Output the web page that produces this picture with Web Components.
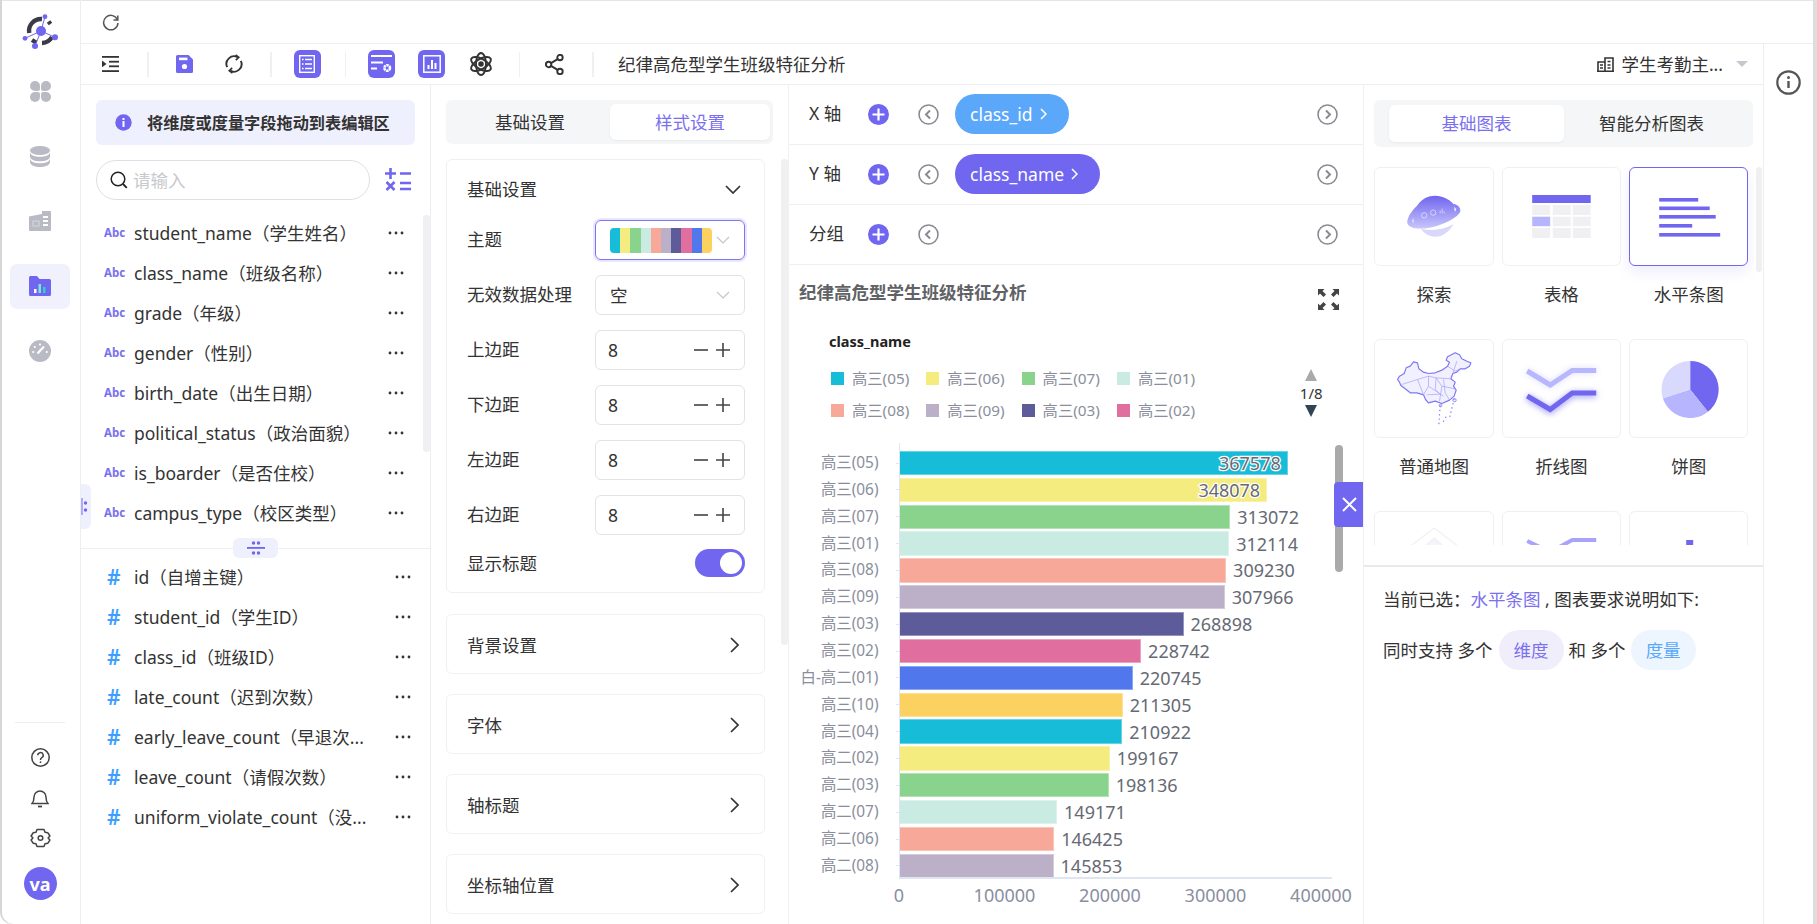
<!DOCTYPE html>
<html lang="zh"><head><meta charset="utf-8"><title>图表编辑</title>
<style>
html,body{margin:0;padding:0;background:#fff;overflow:hidden}
body{font-family:"Noto Sans","Noto Sans CJK SC",sans-serif;font-size:17.5px;color:#333}
</style></head>
<body><x-app></x-app>
<script>
const P='#7066f0';
function comp(name,css,render){
  customElements.define(name,class extends HTMLElement{
    connectedCallback(){
      if(this.shadowRoot)return;
      const s=this.attachShadow({mode:'open'});
      s.innerHTML=`<style>${css}</style>`+render(this);
    }
  });
}
const ic={
 topRefresh:`<svg width="18" height="18" viewBox="0 0 18 18" fill="none" stroke="#555" stroke-width="1.5"><path d="M15.6 7.2A7.2 7.2 0 1 0 16 10"/><path d="M11.5 6.9h4.3V2.6" stroke-linejoin="miter"/></svg>`,
 collapse:`<svg width="17" height="16" viewBox="0 0 17 16"><g fill="#333"><rect width="17" height="1.8"/><rect x="7" y="4.8" width="10" height="1.8"/><rect x="7" y="9.4" width="10" height="1.8"/><rect y="14.2" width="17" height="1.8"/><path d="M0 4.5l4.5 3.4L0 11.3z"/></g></svg>`,
 save:`<svg width="17" height="18" viewBox="0 0 17 18"><path d="M1.5 0H12.5L17 4.5V16.5a1.5 1.5 0 0 1-1.5 1.5H1.5A1.5 1.5 0 0 1 0 16.5V1.5A1.5 1.5 0 0 1 1.5 0z" fill="${P}"/><rect x="3" y="2.6" width="8.5" height="2.6" fill="#fff"/><circle cx="8.5" cy="11.5" r="2.6" fill="#fff"/></svg>`,
 sync:`<svg width="18" height="20" viewBox="0 0 18 20" fill="none" stroke="#333" stroke-width="1.9"><path d="M2.2 13.2A7.6 7.6 0 0 1 12.8 3.3"/><path d="M15.8 6.8A7.6 7.6 0 0 1 5.2 16.7"/><path d="M10.6 .8l3.2 2.6-3 2.8" stroke-width="1.6"/><path d="M7.4 19.2l-3.2-2.6 3-2.8" stroke-width="1.6"/></svg>`,
 list:`<svg width="16" height="18" viewBox="0 0 16 18" fill="none" stroke="#fff"><rect x=".7" y=".7" width="14.6" height="16.6" stroke-width="1.4"/><g stroke-width="1.6"><path d="M3 4.5h1.6M6 4.5h7M3 9h1.6M6 9h7M3 13.5h1.6M6 13.5h7"/></g></svg>`,
 setbars:`<svg width="21" height="19" viewBox="0 0 21 19" fill="none" stroke="#fff" stroke-width="1.8"><path d="M0 1h21M0 7.5h12M0 13.5h6"/><circle cx="16.2" cy="13" r="2.8" stroke-width="2.6" stroke-dasharray="2.4 .6"/></svg>`,
 chart:`<svg width="18" height="18" viewBox="0 0 18 18" fill="none" stroke="#fff"><rect x=".8" y=".8" width="16.4" height="16.4" stroke-width="1.5"/><path d="M5.5 14v-4M9 14V5M12.5 14V8" stroke-width="2"/></svg>`,
 atom:`<svg width="22" height="24" viewBox="0 0 22 24" fill="none" stroke="#333" stroke-width="1.9"><g transform="translate(11 12)"><ellipse rx="5" ry="11"/><ellipse rx="5" ry="11" transform="rotate(60)"/><ellipse rx="5" ry="11" transform="rotate(120)"/><circle r="1.8" fill="#333"/></g></svg>`,
 share:`<svg width="19" height="21" viewBox="0 0 19 21" fill="none" stroke="#333" stroke-width="1.9"><circle cx="3.6" cy="10.5" r="2.7"/><circle cx="15" cy="3.6" r="2.7"/><circle cx="15" cy="17.4" r="2.7"/><path d="M6 9.1l6.6-4M6 11.9l6.6 4"/></svg>`,
 db:`<svg width="17" height="15" viewBox="0 0 17 15" fill="none" stroke="#333" stroke-width="1.6"><path d="M1 14V5h7V14M8 14V1h8v13M0 14.2h17"/><path d="M3 8h3M3 11h3M10.5 4.5h3M10.5 8h3M10.5 11h3" stroke-width="1.5"/></svg>`,
 info:`<svg width="25" height="25" viewBox="0 0 25 25" fill="none" stroke="#555" stroke-width="2.2"><circle cx="12.5" cy="12.5" r="11.2"/><path d="M12.5 11v7" stroke-width="2.4"/><circle cx="12.5" cy="7.5" r="1.5" fill="#555" stroke="none"/></svg>`,
 logo:`<svg width="38" height="38" viewBox="0 0 38 38" fill="none"><g stroke="#7066f0" stroke-width="1"><path d="M20 18L24 3.700M20 18L4 25.300M20 18L34 24.300M20 18L14 33"/></g><g stroke="#3a3a48" stroke-width="4.400" fill="none"><path d="M8.200 20A12 12 0 0 1 21 6"/><path d="M27.500 8.500L29.500 11"/><path d="M31 24A12 12 0 0 1 21 30"/><path d="M11 27L15 29.500"/></g><g fill="#7066f0"><circle cx="20" cy="18" r="5"/><circle cx="24" cy="3.700" r="2.400"/><circle cx="4" cy="25.300" r="2.400"/><circle cx="34" cy="24.300" r="3"/><circle cx="14" cy="33" r="3"/></g></svg>`,
 petals:`<svg width="21" height="21" viewBox="0 0 21 21" fill="#b9bac4"><path d="M0 5a5 5 0 0 1 10 0c0 1 0 4-.5 4.500S6 10 5 10a5 5 0 0 1-5-5z"/><path d="M21 5a5 5 0 0 0-10 0c0 1 0 4 .5 4.500S15 10 16 10a5 5 0 0 0 5-5z"/><path d="M0 16a5 5 0 0 0 10 0c0-1 0-4-.5-4.500S6 11 5 11a5 5 0 0 0-5 5z"/><path d="M21 16a5 5 0 0 1-10 0c0-1 0-4 .5-4.500S15 11 16 11a5 5 0 0 1 5 5z"/></svg>`,
 stack:`<svg width="20" height="21" viewBox="0 0 20 21" fill="#b9bac4"><ellipse cx="10" cy="4.500" rx="10" ry="4.500"/><path d="M0 6.500C1 9.500 5 10.800 10 10.800S19 9.500 20 6.500V11c-1 3-5 4.300-10 4.300S1 14 0 11z"/><path d="M0 13c1 3 5 4.300 10 4.300s9-1.300 10-4.300v3.500c-1 3-5 4.500-10 4.500S1 19.500 0 16.500z"/></svg>`,
 board:`<svg width="22" height="20" viewBox="0 0 22 20"><path d="M0 5.500L13 3V0h8a1 1 0 0 1 1 1v18a1 1 0 0 1-1 1H1a1 1 0 0 1-1-1z" fill="#b9bac4"/><g fill="#fff"><rect x="14" y="5" width="5" height="2"/><rect x="14" y="9" width="5" height="2"/><rect x="14" y="13" width="5" height="2"/></g><g fill="none" stroke="#d8d9df"><rect x="4" y="10" width="6" height="5"/></g></svg>`,
 folder:`<svg width="22" height="20" viewBox="0 0 22 20"><path d="M0 1.500A1.500 1.500 0 0 1 1.500 0H8l2.500 3h10A1.500 1.500 0 0 1 22 4.500V18.500a1.500 1.500 0 0 1-1.500 1.500H1.500A1.500 1.500 0 0 1 0 18.500z" fill="${P}"/><rect x="5" y="13" width="2.500" height="4" fill="#fff"/><rect x="9.500" y="8" width="2.500" height="9" fill="#7fe3d8"/><rect x="14" y="11" width="2.500" height="6" fill="#2fd0c8"/></svg>`,
 gauge:`<svg width="22" height="22" viewBox="0 0 22 22"><circle cx="11" cy="11" r="11" fill="#b9bac4"/><path d="M8.500 13.500L15 6.500" stroke="#fff" stroke-width="2.200"/><g fill="#fff"><circle cx="11" cy="4.500" r="1.100"/><circle cx="5.800" cy="7" r="1.100"/><circle cx="4.200" cy="12" r="1.100"/><circle cx="17.800" cy="12" r="1.100"/></g></svg>`,
 help:`<svg width="19" height="19" viewBox="0 0 19 19" fill="none" stroke="#444" stroke-width="1.500"><circle cx="9.500" cy="9.500" r="8.700"/><path d="M6.800 7.300a2.700 2.700 0 1 1 4 2.400c-1 .6-1.300 1-1.300 2.200"/><circle cx="9.500" cy="14.200" r=".9" fill="#444" stroke="none"/></svg>`,
 bell:`<svg width="18" height="20" viewBox="0 0 18 20" fill="none" stroke="#444" stroke-width="1.500"><path d="M1 15.500h16c-1.500-1.500-2-3-2-6.500a6 6 0 0 0-12 0c0 3.500-.5 5-2 6.500z"/><path d="M7 18.500h4" stroke-width="1.800"/></svg>`,
 gear:`<svg width="21" height="20" viewBox="0 0 21 20" fill="none" stroke="#444" stroke-width="1.500"><path d="M7 1.500h7l1 2.700 2.900.6 2 3.200-1.800 2 1.800 2-2 3.200-2.900.6-1 2.700H7l-1-2.700-2.900-.6-2-3.200 1.800-2-1.800-2 2-3.200 2.900-.6z" stroke-linejoin="round"/><circle cx="10.500" cy="10" r="2.300"/></svg>`,
 infoFill:`<svg width="17" height="17" viewBox="0 0 17 17"><circle cx="8.500" cy="8.500" r="8.200" fill="${P}"/><rect x="7.500" y="7" width="2" height="6" fill="#fff"/><rect x="7.500" y="4" width="2" height="2" fill="#fff"/></svg>`,
 search:`<svg width="18" height="18" viewBox="0 0 18 18" fill="none" stroke="#222" stroke-width="1.500"><circle cx="8" cy="8" r="6.800"/><path d="M13 13l3.800 3.800" stroke-width="1.800"/></svg>`,
 math:`<svg width="26" height="25" viewBox="0 0 26 25" fill="none" stroke="${P}" stroke-width="2.600"><path d="M0 6.500h11M5.500 1v11M15 6.500h11M1.500 15l8 8M9.500 15l-8 8M15 16h11M15 22h11"/></svg>`,
 dots:`<svg width="16" height="4" viewBox="0 0 16 4" fill="#333"><circle cx="2" cy="2" r="1.400"/><circle cx="8" cy="2" r="1.400"/><circle cx="14" cy="2" r="1.400"/></svg>`,
 vdots:`<svg width="9" height="45" viewBox="0 0 9 45"><rect x="0.500" y="14" width="1" height="17" fill="${P}"/><circle cx="4.500" cy="19" r="1.700" fill="${P}"/><circle cx="4.500" cy="26" r="1.700" fill="${P}"/></svg>`,
 split:`<svg width="18" height="14" viewBox="0 0 18 14" fill="${P}"><circle cx="6.500" cy="2" r="1.700"/><circle cx="11.500" cy="2" r="1.700"/><rect y="6" width="18" height="1.800"/><circle cx="6.500" cy="12" r="1.700"/><circle cx="11.500" cy="12" r="1.700"/></svg>`,
 chevD:`<svg width="16" height="9" viewBox="0 0 16 9" fill="none" stroke="#333" stroke-width="1.700"><path d="M1 1l7 7 7-7"/></svg>`,
 chevR:`<svg width="9" height="16" viewBox="0 0 9 16" fill="none" stroke="#333" stroke-width="1.700"><path d="M1 1l7 7-7 7"/></svg>`,
 chevLight:`<svg width="14" height="8" viewBox="0 0 14 8" fill="none" stroke="#c4c6cf" stroke-width="1.200"><path d="M1 1l6 6 6-6"/></svg>`,
 minus:`<svg width="14" height="14" viewBox="0 0 14 14"><rect y="6.200" width="14" height="1.600" fill="#444"/></svg>`,
 plus:`<svg width="14" height="14" viewBox="0 0 14 14"><path d="M0 7h14M7 0v14" stroke="#444" stroke-width="1.600"/></svg>`,
 addC:`<svg width="21" height="21" viewBox="0 0 21 21"><circle cx="10.500" cy="10.500" r="10.500" fill="${P}"/><path d="M4.500 10.500h12M10.500 4.500v12" stroke="#fff" stroke-width="2.200"/></svg>`,
 circL:`<svg width="21" height="21" viewBox="0 0 21 21" fill="none" stroke="#8a8a92" stroke-width="1.600"><circle cx="10.500" cy="10.500" r="9.500"/><path d="M12 6.500l-4 4 4 4" stroke-width="2"/></svg>`,
 circR:`<svg width="21" height="21" viewBox="0 0 21 21" fill="none" stroke="#8a8a92" stroke-width="1.600"><circle cx="10.500" cy="10.500" r="9.500"/><path d="M9 6.500l4 4-4 4" stroke-width="2"/></svg>`,
 expand:`<svg width="21" height="21" viewBox="0 0 21 21" fill="#444"><path d="M0 0h6.500L4.500 2 8 5.500 5.500 8 2 4.500 0 6.500z"/><path d="M21 0v6.500L19 4.500 15.500 8 13 5.500 16.500 2 14.500 0z"/><path d="M0 21v-6.500L2 16.500 5.500 13 8 15.500 4.500 19l2 2z"/><path d="M21 21h-6.500l2-2L13 15.500 15.500 13 19 16.500l2-2z"/></svg>`,
 close:`<svg width="15" height="15" viewBox="0 0 15 15" stroke="#fff" stroke-width="2"><path d="M1 1l13 13M14 1L1 14"/></svg>`
};

comp('x-app',`:host{display:grid;grid-template-columns:81px 1fr;width:1817px;height:924px;overflow:hidden;background:#fff;border-right:4px solid #ddd;box-sizing:border-box}
.r{display:flex;flex-direction:column;min-width:0;height:924px}
.b{display:flex;flex:1;min-height:0}`,
()=>`<x-rail></x-rail><div class="r"><x-topbar></x-topbar><div class="b"><x-main></x-main><x-inforail></x-inforail></div></div>`);

comp('x-rail',`:host{display:flex;flex-direction:column;align-items:center;box-sizing:border-box;width:81px;height:924px;border-right:1px solid #eeeef2;box-shadow:inset 2px 0 0 #d6d6d6,inset 0 1px 0 #e6e6e6;border-radius:0 0 0 12px;padding-bottom:24px}
.logo{height:38px;margin:13px 0 17.500px;display:flex}
.it{width:60px;height:45px;display:flex;align-items:center;justify-content:center;margin-bottom:20px;border-radius:7px}
.it.on{background:#f0f1fd}
.bot{margin-top:auto;display:flex;flex-direction:column;align-items:center;width:100%}
.sep{width:50px;height:1px;background:#ececf0;margin-bottom:25px}
.s{height:19px;display:flex;align-items:center;margin-bottom:21.500px}
.av{width:33px;height:33px;border-radius:50%;background:${P};color:#fff;font-weight:700;font-size:18px;display:flex;align-items:center;justify-content:center;margin-top:-2px;line-height:1}`,
()=>`<div class="logo">${ic.logo}</div>
<div class="it">${ic.petals}</div><div class="it">${ic.stack}</div><div class="it">${ic.board}</div><div class="it on">${ic.folder}</div><div class="it">${ic.gauge}</div>
<div class="bot"><div class="sep"></div><div class="s">${ic.help}</div><div class="s">${ic.bell}</div><div class="s">${ic.gear}</div><div class="av">va</div></div>`);

comp('x-topbar',`:host{display:flex;align-items:center;height:44px;box-sizing:border-box;border-bottom:1px solid #eeeef2;box-shadow:inset 0 1px 0 #e6e6e6;padding-left:21px;flex:none}svg{display:block}`,()=>ic.topRefresh);

comp('x-inforail',`:host{display:flex;justify-content:center;box-sizing:border-box;width:50px;padding-top:25.500px;border-left:1px solid #eeeef2}`,()=>`<div>${ic.info}</div>`);

comp('x-main',`:host{display:flex;flex-direction:column;flex:1;min-width:0}
.c{display:flex;flex:1;min-height:0}`,()=>`<x-toolbar></x-toolbar><div class="c"><x-fields></x-fields><x-settings></x-settings><x-chartpanel></x-chartpanel><x-gallery></x-gallery></div>`);

comp('x-toolbar',`:host{display:flex;align-items:center;height:41px;box-sizing:border-box;border-bottom:1px solid #eeeef2;flex:none;white-space:nowrap}
.i{display:flex;flex:none}.sep{width:1.500px;height:25px;background:#eef0f4;flex:none}
.b{width:27px;height:28px;border-radius:6px;background:${P};display:flex;align-items:center;justify-content:center;flex:none}
.t{margin-left:24.500px;line-height:24px}
.rt{margin-left:auto;display:flex;align-items:center;padding-right:15px}
.rt span{margin-left:7px;line-height:24px}
.car{width:0;height:0;border:6px solid transparent;border-top:6px solid #c6c8d0;border-bottom:0;margin-left:13px}`,
()=>`<div class="i" style="margin-left:21px">${ic.collapse}</div><div class="sep" style="margin-left:28px"></div>
<div class="i" style="margin-left:27.500px">${ic.save}</div><div class="i" style="margin-left:32px">${ic.sync}</div><div class="sep" style="margin-left:27px"></div>
<div class="b" style="margin-left:22.500px;width:26.500px">${ic.list}</div><div class="sep" style="margin-left:24px"></div>
<div class="b" style="margin-left:22px">${ic.setbars}</div><div class="b" style="margin-left:23px">${ic.chart}</div>
<div class="i" style="margin-left:25px">${ic.atom}</div><div class="sep" style="margin-left:26.500px"></div>
<div class="i" style="margin-left:25px">${ic.share}</div><div class="sep" style="margin-left:28px"></div>
<div class="t">纪律高危型学生班级特征分析</div>
<div class="rt">${ic.db}<span>学生考勤主...</span><i class="car"></i></div>`);

comp('x-field',`:host{display:flex;align-items:center;height:40px;padding-left:23px;white-space:nowrap}
.k{width:30px;flex:none;display:flex;align-items:center;line-height:1}
.abc{font-size:11.500px;font-weight:700;color:#7a70ee;width:24px;margin-top:-1px}
.hash{font-size:21px;font-weight:600;color:#409eff;padding-left:3px}
.n{line-height:24px}
.d{margin-left:auto;display:flex}`,
el=>`<div class="k"><span class="${el.getAttribute('kind')}">${el.getAttribute('kind')=='abc'?'Abc':'#'}</span></div><span class="n"><slot></slot></span><span class="d" style="padding-right:${el.getAttribute('pr')}px">${ic.dots}</span>`);

comp('x-fields',`:host{display:block;position:relative;box-sizing:border-box;width:350px;border-right:1px solid #eeeef2;padding-top:15px;flex:none;overflow:hidden}
.hint{margin:0 15px;height:45px;box-sizing:border-box;background:#eff0fd;border-radius:6px;display:flex;align-items:center;padding-left:19px;font-size:16.200px;font-weight:600;white-space:nowrap}
.hint svg{margin-right:15px;flex:none}
.hint span{padding-bottom:2px}
.srow{display:flex;align-items:center;margin:15px 0 13px 15px}
.search{box-sizing:border-box;width:274px;height:40px;border:1px solid #dfe0e6;border-radius:20px;display:flex;align-items:center;padding-left:13px;color:#c8c9cc}
.search span{margin-left:5px;line-height:24px}
.srow>svg{margin-left:15px;margin-bottom:2px}
.div{height:1px;background:#eeeef2;margin:15px 0 8px}
.thumb{position:absolute;left:342px;top:130px;width:7px;height:237px;background:#f0f0f3;border-radius:4px}
.h1{position:absolute;left:0;top:399px;width:10px;height:45px;background:#eff0fd;border-radius:0 6px 6px 0}
.h1 svg{display:block;margin-left:0}
.h2{position:absolute;left:152px;top:453px;width:45px;height:20px;background:#eff0fd;border-radius:6px;display:flex;align-items:center;justify-content:center}`,
()=>{
 const a=['student_name（学生姓名）','class_name（班级名称）','grade（年级）','gender（性别）','birth_date（出生日期）','political_status（政治面貌）','is_boarder（是否住校）','campus_type（校区类型）'];
 const b=['id（自增主键）','student_id（学生ID）','class_id（班级ID）','late_count（迟到次数）','early_leave_count（早退次...','leave_count（请假次数）','uniform_violate_count（没...'];
 return `<div class="hint">${ic.infoFill}<span>将维度或度量字段拖动到表编辑区</span></div>
 <div class="srow"><div class="search">${ic.search}<span>请输入</span></div>${ic.math}</div>
 ${a.map(t=>`<x-field kind="abc" pr="26">${t}</x-field>`).join('')}
 <div class="div"></div>
 ${b.map(t=>`<x-field kind="hash" pr="19">${t}</x-field>`).join('')}
 <div class="thumb"></div><div class="h1">${ic.vdots}</div><div class="h2">${ic.split}</div>`;
});

comp('x-settab',`:host{display:flex;align-items:center;justify-content:center;height:100%;border-radius:6px;line-height:24px;white-space:nowrap}
:host([on]){background:#fff;color:#7b70ee;box-shadow:0 1px 3px rgba(0,0,0,.05)}`,()=>`<slot></slot>`);

comp('x-fold',`:host{display:flex;align-items:center;justify-content:space-between;box-sizing:border-box;height:60px;margin-bottom:20px;border:1px solid #f0f0f3;border-radius:6px;padding:1px 25px 0 20px;line-height:24px}svg{display:block}`,()=>`<slot></slot>${ic.chevR}`);

comp('x-setrow',`:host{display:flex;align-items:center;height:40px;margin-bottom:15px;line-height:24px;white-space:nowrap}
span{padding-bottom:2px}
.c{margin-left:auto;width:150px;flex:none}`,el=>`<span>${el.getAttribute('label')}</span><div class="c"><slot></slot></div>`);

comp('x-select',`:host{display:flex;align-items:center;box-sizing:border-box;width:150px;height:40px;border:1px solid #e2e2e8;border-radius:6px;padding:0 14px 0 14px;line-height:24px}
:host([focus]){border-color:#8075ef;box-shadow:0 0 0 2px #e9e7fd}
svg{margin-left:auto;display:block}`,()=>`<slot></slot>${ic.chevLight}`);

comp('x-palette',`:host{display:flex;width:102px;height:25px;border-radius:4px;overflow:hidden}i{flex:1}`,
()=>['#16bcd8','#f5ec7f','#8ad38c','#c9ebe2','#f8a898','#bcb0c8','#5d5b9a','#e06fa0','#5078ec','#fbd25f'].map(c=>`<i style="background:${c}"></i>`).join(''));

comp('x-number',`:host{display:flex;align-items:center;box-sizing:border-box;width:150px;height:40px;border:1px solid #e2e2e8;border-radius:6px;padding:0 14px 0 12px;line-height:24px}
svg{display:block}.m{margin-left:auto;margin-right:8px;display:flex}`,el=>`<span>${el.getAttribute('value')}</span><span class="m">${ic.minus}</span>${ic.plus}`);

comp('x-settings',`:host{display:block;position:relative;box-sizing:border-box;width:358px;padding:15px 0 0 15px;flex:none;overflow:hidden}
.tabs{width:327px;height:44px;box-sizing:border-box;background:#f5f6f8;border-radius:6px;display:flex;padding:4px 3px 4px 4px;margin-bottom:15px}
.tabs x-settab{flex:1}.tabs x-settab[on]{flex:none;width:160px}
.card{width:319px;box-sizing:border-box;border:1px solid #f0f0f3;border-radius:6px;padding:0 19px 0 20px;margin-bottom:21px;height:434px}
.hd{display:flex;align-items:center;justify-content:space-between;box-sizing:border-box;height:60px;padding:0 4px 2px 0;line-height:24px}
.hd svg{display:block}
.rest{width:319px}
.tg{display:flex;align-items:center;justify-content:space-between;height:28px;line-height:24px;margin-top:-1px}
.sw{width:50px;height:28px;border-radius:14px;background:${P};position:relative;display:block}
.sw::after{content:"";position:absolute;right:3px;top:3px;width:22px;height:22px;border-radius:50%;background:#fff}
.thumb{position:absolute;left:350px;top:74px;width:7px;height:486px;background:#f0f0f3;border-radius:4px}`,
()=>`<div class="tabs"><x-settab>基础设置</x-settab><x-settab on>样式设置</x-settab></div>
<div class="card"><div class="hd"><span>基础设置</span>${ic.chevD}</div>
<x-setrow label="主题"><x-select focus><x-palette></x-palette></x-select></x-setrow>
<x-setrow label="无效数据处理"><x-select>空</x-select></x-setrow>
<x-setrow label="上边距"><x-number value="8"></x-number></x-setrow>
<x-setrow label="下边距"><x-number value="8"></x-number></x-setrow>
<x-setrow label="左边距"><x-number value="8"></x-number></x-setrow>
<x-setrow label="右边距"><x-number value="8"></x-number></x-setrow>
<div class="tg"><span>显示标题</span><i class="sw"></i></div></div>
<div class="rest"><x-fold>背景设置</x-fold><x-fold>字体</x-fold><x-fold>轴标题</x-fold><x-fold>坐标轴位置</x-fold></div>
<div class="thumb"></div>`);

comp('x-axisrow',`:host{display:flex;align-items:center;box-sizing:border-box;height:60px;border-bottom:1px solid #f0f0f3;padding:0 25px 1px 20px;white-space:nowrap}
.l{width:59px;line-height:24px;padding-bottom:2px}svg{display:block;flex:none}
.cl{margin-left:29px;display:flex}
.r{margin-left:auto;display:flex}
.s{width:16px;flex:none}`,
el=>`<span class="l">${el.getAttribute('label')}</span>${ic.addC}<span class="cl">${ic.circL}</span><span class="s"></span><slot></slot><span class="r">${ic.circR}</span>`);

comp('x-pill',`:host{display:inline-flex;align-items:center;height:40px;border-radius:20px;padding:0 22px 0 15px;color:#fff;background:var(--c);line-height:24px;white-space:nowrap}
svg{display:block;margin-left:7px}`,()=>`<slot></slot><svg width="7" height="12" viewBox="0 0 7 12" fill="none" stroke="#fff" stroke-width="1.500"><path d="M1 1l5 5-5 5"/></svg>`);

comp('x-legitem',`:host{display:flex;align-items:center;font-size:15.300px;color:#8a8e9c;line-height:20px;white-space:nowrap}
i{width:13px;height:13px;margin-right:8px;background:var(--c);flex:none}`,()=>`<i></i><slot></slot>`);

comp('x-bar',`:host{display:grid;grid-template-columns:89.500px 21px 1fr;height:26.870px;align-items:center;white-space:nowrap}
.l{font-size:15.400px;color:#8a8e9c;text-align:right;line-height:20px}
.t{width:4px;height:1px;background:#e0e6f1;margin-left:auto}
.a{display:flex;align-items:center}
.bar{box-sizing:border-box;height:24.300px;background:var(--c);border:1px solid rgba(255,255,255,.35);border-left:0;display:flex;align-items:center;justify-content:flex-end;padding-right:6px;flex:none}
.v{line-height:24px;color:#666a74;font-size:18px}
.o{margin-left:7px}
.in{-webkit-text-stroke:2.500px #fff;paint-order:stroke fill}`,
el=>{const v=+el.getAttribute('value'),w=v/400000*422.500;const inn=el.hasAttribute('inside');
 return `<span class="l">${el.getAttribute('label')}</span><i class="t"></i><div class="a"><div class="bar" style="width:${w}px">${inn?`<span class="v in">${v}</span>`:''}</div>${inn?'':`<span class="v o">${v}</span>`}</div>`;});

comp('x-bars',`:host{display:block;height:434px;padding-top:6.600px;box-sizing:border-box;overflow:hidden;background:linear-gradient(#e0e6f1,#e0e6f1) 110px 0/1px 100% no-repeat}`,()=>{
 const d=[['高三(05)',367578],['高三(06)',348078],['高三(07)',313072],['高三(01)',312114],['高三(08)',309230],['高三(09)',307966],['高三(03)',268898],['高三(02)',228742],['白-高二(01)',220745],['高三(10)',211305],['高三(04)',210922],['高二(02)',199167],['高二(03)',198136],['高二(07)',149171],['高二(06)',146425],['高二(08)',145853]];
 const c=['#16bcd8','#f5ec7f','#8ad38c','#c9ebe2','#f8a898','#bcb0c8','#5d5b9a','#e06fa0','#5078ec','#fbd25f'];
 return d.map((r,i)=>`<x-bar style="--c:${c[i%10]}" label="${r[0]}" value="${r[1]}"${i<2?' inside':''}></x-bar>`).join('');
});

comp('x-chartpanel',`:host{display:block;position:relative;box-sizing:border-box;width:575px;border-left:1px solid #f0f0f3;border-right:1px solid #f0f0f3;flex:none;overflow:hidden;margin-left:-1px;width:576px}
.head{display:flex;justify-content:space-between;padding:15px 24px 0 10px}
.title{font-weight:700;color:#606266;line-height:24px;white-space:nowrap}
.head svg{margin-top:9px;display:block}
.ln{margin:21px 0 11px 40px;font-weight:700;font-size:14.500px;color:#222;line-height:20px}
.leg{display:flex;margin-left:42px;height:64px;margin-bottom:17px}
.grid{display:grid;grid-template-columns:repeat(4,95.300px);grid-auto-rows:32px;align-items:center}
.pg{margin-left:84px;width:30px;display:flex;flex-direction:column;align-items:center;padding-top:7px;font-size:15px;line-height:24px;color:#333}
.up,.dn{width:0;height:0;border:6.500px solid transparent;border-top:0;border-bottom:12px solid #aaa}
.dn{border-bottom:0;border-top:12px solid #2f4554}
.ax{height:1.500px;width:433px;margin-left:110px;background:#e0e6f1}
.ticks{display:flex;margin:4px 0 0 57.250px;color:#8a8e9f;line-height:24px;font-size:18px}
.ticks span{width:105.500px;flex:none;text-align:center}
.slider{position:absolute;left:546px;top:360px;width:8px;height:127px;background:#aaa;border-radius:4px}
.close{position:absolute;left:545px;top:397px;width:31px;height:45px;background:${P};border-radius:4px 0 0 4px;display:flex;align-items:center;justify-content:center}`,
()=>{
 const l=[['高三(05)','#16bcd8'],['高三(06)','#f5ec7f'],['高三(07)','#8ad38c'],['高三(01)','#c9ebe2'],['高三(08)','#f8a898'],['高三(09)','#bcb0c8'],['高三(03)','#5d5b9a'],['高三(02)','#e06fa0']];
 return `<x-axisrow label="X 轴"><x-pill style="--c:#5ba8fb">class_id</x-pill></x-axisrow>
 <x-axisrow label="Y 轴"><x-pill style="--c:${P}">class_name</x-pill></x-axisrow>
 <x-axisrow label="分组"></x-axisrow>
 <div class="head"><span class="title">纪律高危型学生班级特征分析</span>${ic.expand}</div>
 <div class="ln">class_name</div>
 <div class="leg"><div class="grid">${l.map(x=>`<x-legitem style="--c:${x[1]}">${x[0]}</x-legitem>`).join('')}</div>
 <div class="pg"><i class="up"></i><span>1/8</span><i class="dn"></i></div></div>
 <x-bars></x-bars><div class="ax"></div>
 <div class="ticks"><span>0</span><span>100000</span><span>200000</span><span>300000</span><span>400000</span></div>
 <div class="slider"></div><div class="close">${ic.close}</div>`;
});

comp('x-gcard',`:host{display:block}
.box{box-sizing:border-box;height:99px;border:1px solid #f0f0f3;border-radius:6px;background:#fff}
:host([sel]) .box{border-color:${P};box-shadow:0 6px 14px rgba(112,102,240,.12)}
svg{display:block;width:117.400px;height:97px}
.l{text-align:center;line-height:24px;margin-top:15.500px;white-space:nowrap}`,
el=>`<div class="box"><svg viewBox="0 0 117 97">${G[el.getAttribute('icon')]}</svg></div>${el.getAttribute('label')?`<div class="l">${el.getAttribute('label')}</div>`:''}`);

const G={
 planet:`<defs><linearGradient id="g" x1="0" y1="0" x2="0" y2="1"><stop offset="0" stop-color="#6f64ee"/><stop offset="1" stop-color="#c9c6fb"/></linearGradient></defs><g transform="translate(-15,-128) scale(.3333)"><path d="M170 498C185 475 205 467 225 467C248 467 268 478 280 492C294 494 303 504 300 516C292 532 255 552 215 562C180 570 145 566 141 548C141 532 155 512 170 498z" fill="url(#g)"/><path d="M182 566C205 600 255 600 280 552C250 570 215 574 182 566z" fill="#d8d7fc"/><g fill="none" stroke="#fff" stroke-width="2" opacity=".8"><circle cx="192" cy="526" r="8"/><circle cx="219" cy="518" r="8"/><path d="M240 520v-8M246 520v-14M252 520v-6"/></g><path d="M160 535l-4 8 4 6zM282 500l6 8-4 8z" fill="#fff"/></g>`,
 table:`<rect x="29" y="27" width="58.500" height="8" fill="${P}"/>${[[37,10],[48.700,9.500],[60,10]].map((r,i)=>[29,49.500,69.500].map((x,j)=>`<rect x="${x}" y="${r[0]}" width="18" height="${r[1]}" fill="${i==1&&j==0?'#b6b5fd':'#f0f0f3'}"/>`).join('')).join('')}`,
 hbar:`<g fill="${P}"><rect x="29" y="30" width="39" height="3.600"/><rect x="29" y="38.500" width="50.500" height="3.600"/><rect x="29" y="47" width="56.500" height="3.600"/><rect x="29" y="56" width="33" height="3.600"/><rect x="29" y="65" width="61" height="3.600"/></g>`,
 map:`<g transform="translate(-15,-10.500) scale(.3333)"><path d="M112 150L118 140L132 132L138 115L150 110L160 97L172 100L176 118L190 128L205 132L225 130L245 122L262 110L268 98L258 92L262 82L285 70L298 76L305 88L320 95L332 100L328 110L315 118L300 118L290 128L278 132L272 148L285 158L280 170L288 182L282 200L268 212L245 222L225 215L205 220L196 210L190 196L170 190L150 190L135 178L122 168L118 158z" fill="#f0f0fe" stroke="#7f76f2" stroke-width="3.500" stroke-linejoin="round"/><g fill="none" stroke="#a9a4f9" stroke-width="2.200"><path d="M172 150L205 140L228 145L245 170L238 215M125 165L172 150L190 196M228 145L272 148M245 170L285 178M205 170L250 200M262 110L285 125L300 118M200 196L240 194M205 140L205 170L190 196M228 145L225 180L240 194M250 150L255 190L268 212M290 95L278 132"/></g><g fill="none" stroke="#7f76f2" stroke-width="3.500" stroke-dasharray="4 9"><path d="M240 228L236 285M282 208L268 265M258 262L246 282"/></g><circle cx="283" cy="212" r="5" fill="none" stroke="#7f76f2" stroke-width="2.500"/><circle cx="241" cy="228" r="4" fill="none" stroke="#7f76f2" stroke-width="2.500"/></g>`,
 line:`<defs><filter id="bl" x="-20%" y="-50%" width="140%" height="200%"><feGaussianBlur stdDeviation="3"/></filter></defs><g fill="none" stroke-width="5"><path d="M24 31L47 45L69 30.500H93" stroke="#b8b6fd" filter="url(#bl)" opacity=".5"/><path d="M24 31L47 45L69 30.500H93" stroke="#b8b6fd"/><path d="M24 57L47 71L69 54.500H93" stroke="${P}" filter="url(#bl)" opacity=".7"/><path d="M24 56L47 69.500L69 53H93" stroke="${P}"/></g>`,
 pie:`<g transform="translate(60,49.500)"><path d="M0 0V-28.500A28.500 28.500 0 0 1 17.700 22.300z" fill="${P}"/><path d="M0 0L17.700 22.300A28.500 28.500 0 0 1 -27.300 8.700z" fill="#b6b5fd"/><path d="M0 0L-27.300 8.700A28.500 28.500 0 0 1 0 -28.500z" fill="#d9d9fe"/></g>`,
 radar:`<g fill="none" stroke="#f0f0f6" stroke-width="1.200"><path d="M59 16L88 38V80H30V38z"/><path d="M59 26L75 40V70H43V40z" fill="#f4f4fc"/></g>`,
 mix:`<path d="M24 29L47 40L69 28H93" fill="none" stroke="#a9a4fb" stroke-width="4"/>`,
 col:`<rect x="56" y="28" width="7" height="30" fill="${P}"/>`
};

comp('x-gallery',`:host{display:block;position:relative;box-sizing:border-box;width:399px;padding-top:15px;flex:none;overflow:hidden}
.tabs{display:flex;margin-left:10px;width:379px;height:47px;box-sizing:border-box;background:#f5f6f8;border-radius:6px;padding:5px 15px}
.tabs x-settab{width:175px;flex:none;padding-bottom:1px;box-sizing:border-box}
.g{margin:20px 0 20px 10.300px;height:378px;width:380px;overflow:hidden;display:grid;grid-template-columns:repeat(3,119.400px);column-gap:8px;grid-auto-rows:172px}
.hr{height:1.500px;background:#e9e9ee}
.thumb{position:absolute;left:392px;top:82px;width:6px;height:105px;background:#f0f0f3;border-radius:3px}
.info{padding-left:19px;white-space:nowrap}
.a{margin-top:18px;line-height:28px}.a b{font-weight:400;color:#7b70ee}
.c{display:flex;align-items:center;margin-top:17px;gap:5px;line-height:24px}
.t{display:flex;align-items:center;justify-content:center;width:65px;height:40px;border-radius:20px}
.t1{background:#f1eefc;color:#7b70ee;margin-left:1px}.t2{background:#edf5ff;color:#5ba8fb}`,
()=>`<div class="tabs"><x-settab on>基础图表</x-settab><x-settab>智能分析图表</x-settab></div>
<div class="g"><x-gcard icon="planet" label="探索"></x-gcard><x-gcard icon="table" label="表格"></x-gcard><x-gcard icon="hbar" label="水平条图" sel></x-gcard>
<x-gcard icon="map" label="普通地图"></x-gcard><x-gcard icon="line" label="折线图"></x-gcard><x-gcard icon="pie" label="饼图"></x-gcard>
<x-gcard icon="radar"></x-gcard><x-gcard icon="mix"></x-gcard><x-gcard icon="col"></x-gcard></div>
<div class="hr"></div><div class="thumb"></div>
<div class="info"><div class="a">当前已选：<b>水平条图</b> , 图表要求说明如下:</div>
<div class="c">同时支持 多个<div class="t t1">维度</div>和 多个<div class="t t2">度量</div></div></div>`);
</script>
</body></html>
